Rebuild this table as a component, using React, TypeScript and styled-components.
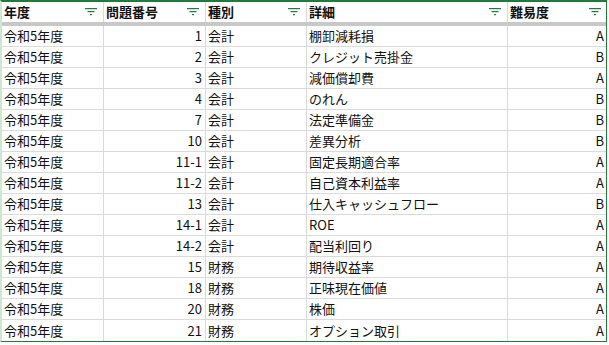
import React from "react";
import styled, { createGlobalStyle } from "styled-components";

const Global = createGlobalStyle`
  html, body { margin: 0; padding: 0; background: #fff; }
  body { font-family: "Noto Sans CJK JP", "Noto Sans", sans-serif; }
`;

const COLS = "102px 102px 101px 201px 99px";

const Sheet = styled.div`
  width: 607px;
  height: 341px;
  overflow: hidden;
  border-top: 2px solid #217a3c;
  border-right: 1px solid #217a3c;
  border-bottom: 1px solid #217a3c;
  border-left: 2px solid #cfe6d3;
  box-sizing: border-box;
  width: 607px;
  height: 342px;
  position: relative;
`;

const HeaderRow = styled.div`
  display: grid;
  grid-template-columns: ${COLS};
  height: 20px;
  border-bottom: 4px solid #c8c8c8;
`;

const HeaderCell = styled.div`
  display: flex;
  align-items: center;
  justify-content: space-between;
  padding: 0 6px 0 2px;
  border-right: 1px solid #d9d9d9;
  font-size: 13px;
  font-weight: 700;
  color: #111;
  line-height: 20px;
  &:last-child { border-right: none; }
`;

const Row = styled.div`
  display: grid;
  grid-template-columns: ${COLS};
  height: 21px;
  box-sizing: border-box;
  border-bottom: 1px solid #dadada;
  &:last-child { border-bottom: none; }
`;

const Cell = styled.div<{ $align?: "left" | "right" }>`
  display: flex;
  align-items: flex-end;
  justify-content: ${(p) => (p.$align === "right" ? "flex-end" : "flex-start")};
  padding: 0 ${(p) => (p.$align === "right" ? "3px" : "2px")} 1px 2px;
  border-right: 1px solid #dadada;
  font-size: 13px;
  color: #111;
  line-height: 18px;
  white-space: nowrap;
  overflow: hidden;
  &:last-child { border-right: none; }
`;

const FilterIcon = () => (
  <svg width="12" height="8" viewBox="0 0 12 8" style={{ flex: "none" }}>
    <rect x="0" y="0" width="12" height="1.2" fill="#217a3c" />
    <rect x="2.5" y="3" width="7" height="1.2" fill="#217a3c" />
    <rect x="5" y="6" width="2" height="1.2" fill="#217a3c" />
  </svg>
);

const headers = ["年度", "問題番号", "種別", "詳細", "難易度"];

const data: [string, string, string, string, string][] = [
  ["令和5年度", "1", "会計", "棚卸減耗損", "A"],
  ["令和5年度", "2", "会計", "クレジット売掛金", "B"],
  ["令和5年度", "3", "会計", "減価償却費", "A"],
  ["令和5年度", "4", "会計", "のれん", "B"],
  ["令和5年度", "7", "会計", "法定準備金", "B"],
  ["令和5年度", "10", "会計", "差異分析", "B"],
  ["令和5年度", "11-1", "会計", "固定長期適合率", "A"],
  ["令和5年度", "11-2", "会計", "自己資本利益率", "A"],
  ["令和5年度", "13", "会計", "仕入キャッシュフロー", "B"],
  ["令和5年度", "14-1", "会計", "ROE", "A"],
  ["令和5年度", "14-2", "会計", "配当利回り", "A"],
  ["令和5年度", "15", "財務", "期待収益率", "A"],
  ["令和5年度", "18", "財務", "正味現在価値", "A"],
  ["令和5年度", "20", "財務", "株価", "A"],
  ["令和5年度", "21", "財務", "オプション取引", "A"],
];

export default function App() {
  return (
    <>
      <Global />
      <Sheet>
        <HeaderRow>
          {headers.map((h) => (
            <HeaderCell key={h}>
              <span>{h}</span>
              <FilterIcon />
            </HeaderCell>
          ))}
        </HeaderRow>
        {data.map((r, i) => (
          <Row key={i}>
            <Cell>{r[0]}</Cell>
            <Cell $align="right">{r[1]}</Cell>
            <Cell>{r[2]}</Cell>
            <Cell>{r[3]}</Cell>
            <Cell $align="right">{r[4]}</Cell>
          </Row>
        ))}
      </Sheet>
    </>
  );
}
